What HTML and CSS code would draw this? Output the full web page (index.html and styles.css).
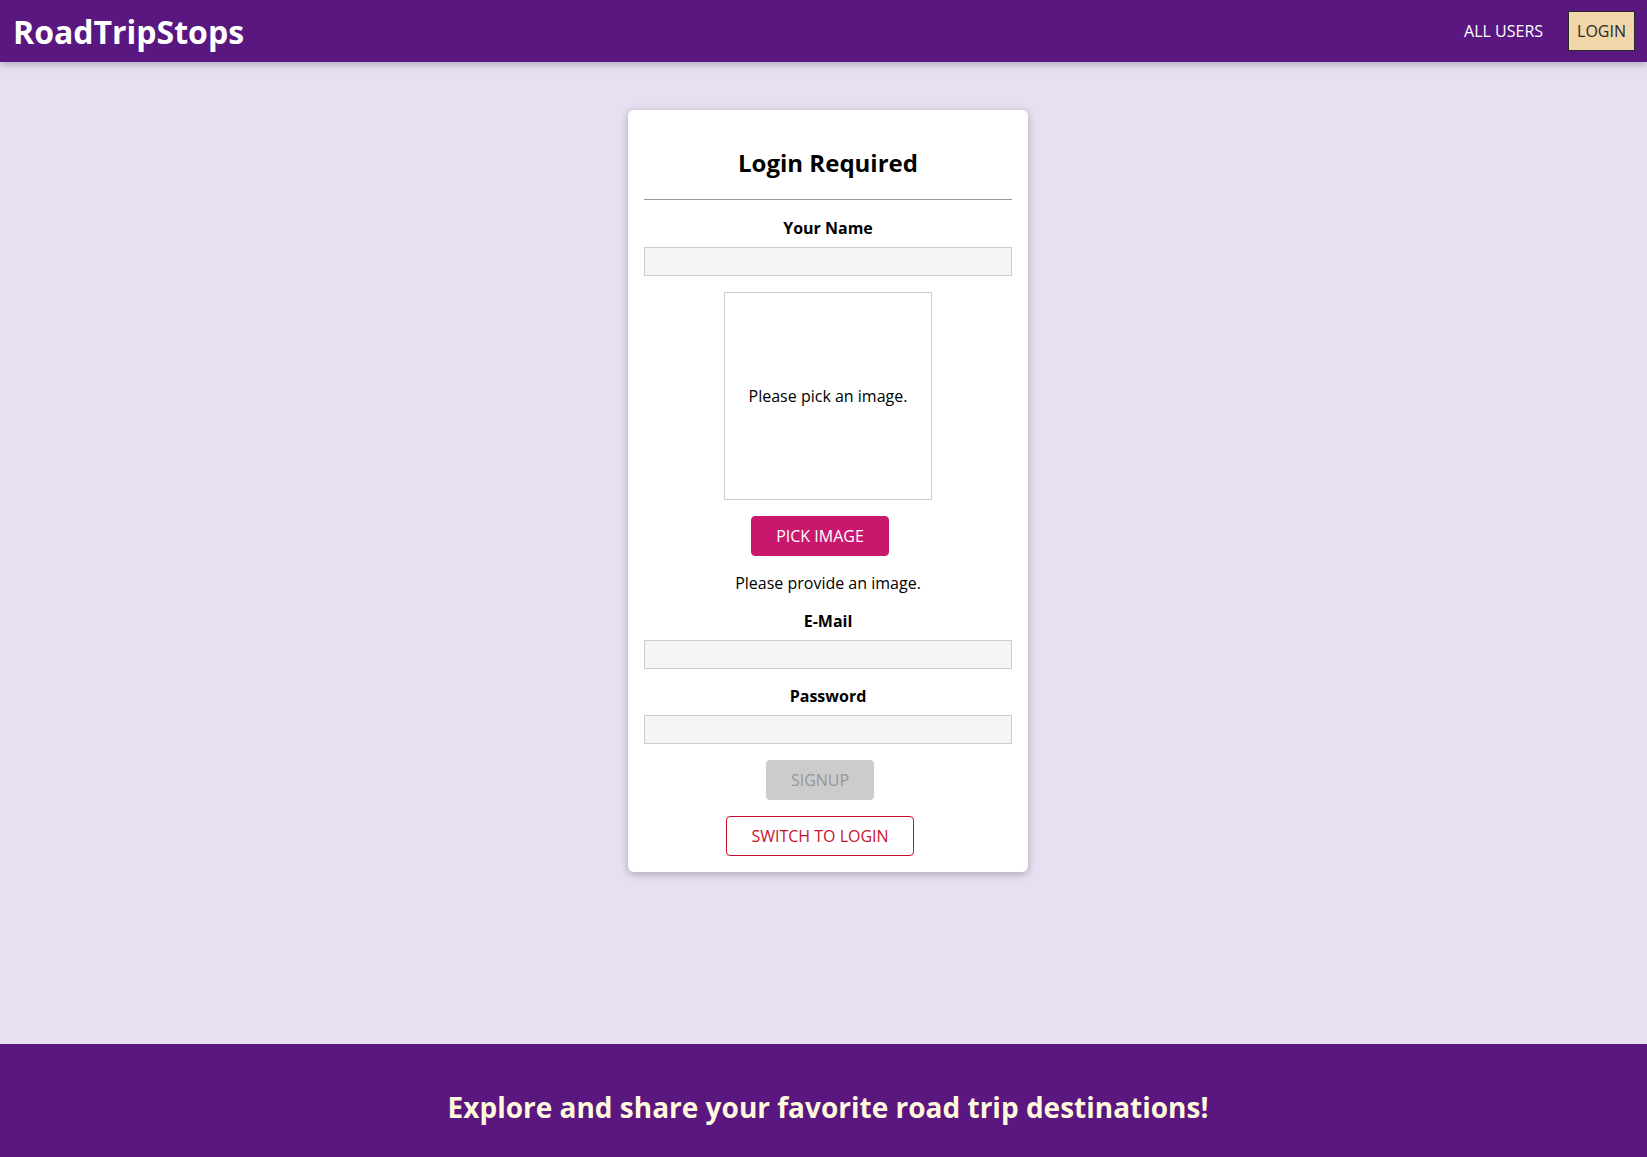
FILE: index.html
```html
<!DOCTYPE html>
<html>

<head>
    <meta charset="utf-8" />
    <title>RoadTripStops</title>
    <link rel="stylesheet" href="styles.css">
</head>

<body>
    <header class="main-header">
        <h1 class="main-title">RoadTripStops</h1>
        <ul class="nav-links">
            <li><a href="#">ALL USERS</a></li>
            <li><a href="#" class="active">LOGIN</a></li>
        </ul>
    </header>

    <main class="main-area">
        <div class="card authentication">
            <h2>Login Required</h2>
            <hr>
            <form class="auth-form">
                <div class="form-control">
                    <label for="name">Your Name</label>
                    <input id="name" type="text">
                </div>
                <div class="image-upload">
                    <div class="image-upload__preview">
                        <p>Please pick an image.</p>
                    </div>
                    <button type="button" class="button">PICK IMAGE</button>
                </div>
                <p class="hint">Please provide an image.</p>
                <div class="form-control">
                    <label for="email">E-Mail</label>
                    <input id="email" type="email">
                </div>
                <div class="form-control">
                    <label for="password">Password</label>
                    <input id="password" type="password">
                </div>
                <button type="submit" class="button" disabled>SIGNUP</button>
            </form>
            <button class="button button--inverse">SWITCH TO LOGIN</button>
        </div>
    </main>

    <footer class="main-footer">
        <h2>Explore and share your favorite road trip destinations!</h2>
    </footer>
</body>

</html>
```

FILE: styles.css
```css
* {
    box-sizing: border-box;
}

body {
    margin: 0;
    font-family: 'Open Sans', sans-serif;
    background-color: #e8dff2;
    min-height: 100vh;
    display: flex;
    flex-direction: column;
}

.main-header {
    height: 62px;
    background-color: #5a1780;
    box-shadow: 0 2px 8px rgba(0, 0, 0, 0.26);
    display: flex;
    align-items: center;
    justify-content: space-between;
    padding: 0 4px 0 13px;
}

.main-title {
    margin: 0;
    color: white;
    font-size: 32px;
    font-weight: 700;
}

.nav-links {
    list-style: none;
    margin: 0;
    padding: 0;
    display: flex;
    align-items: center;
}

.nav-links li {
    margin: 0 8px;
}

.nav-links a {
    display: block;
    border: 1px solid transparent;
    color: white;
    text-decoration: none;
    padding: 8px;
    font-size: 16px;
    line-height: 22px;
}

.nav-links a.active {
    background-color: #f0d6a9;
    border-color: #292929;
    color: #292929;
}

.main-area {
    flex: 1;
    padding: 48px 0 0 9px;
}

.card {
    width: 400px;
    margin: 0 auto;
    background: white;
    border-radius: 6px;
    box-shadow: 0 2px 8px rgba(0, 0, 0, 0.26);
    padding: 16px;
    text-align: center;
}

.card h2 {
    font-size: 24px;
    margin: 20px 0;
    line-height: 33px;
}

.card hr {
    border: 0;
    border-top: 1px solid #999;
    height: 2px;
    margin: 0 0 16px 0;
}

.auth-form {
    display: flex;
    flex-direction: column;
    align-items: center;
}

.form-control {
    width: 100%;
    margin-bottom: 16px;
}

.form-control label {
    display: block;
    font-weight: 700;
    font-size: 16px;
    line-height: 22px;
    margin-bottom: 8px;
}

.form-control input {
    display: block;
    width: 100%;
    height: 29px;
    font: inherit;
    border: 1px solid #ccc;
    background: #f5f5f5;
    padding: 2px 4px;
}

.image-upload {
    display: flex;
    flex-direction: column;
    align-items: center;
}

.image-upload__preview {
    width: 208px;
    height: 208px;
    border: 1px solid #ccc;
    display: flex;
    justify-content: center;
    align-items: center;
    margin-bottom: 16px;
}

.image-upload__preview p,
.hint {
    margin: 0;
    font-size: 16px;
    line-height: 22px;
}

.hint {
    margin: 16px 0;
}

.button {
    font: inherit;
    font-size: 16px;
    line-height: 22px;
    padding: 8px 24px;
    border: 1px solid #c8186e;
    border-radius: 4px;
    background: #c8186e;
    color: white;
    margin-right: 16px;
    cursor: pointer;
}

.button:disabled {
    background: #ccc;
    border-color: #ccc;
    color: #979797;
    cursor: not-allowed;
}

.button--inverse {
    background: white;
    color: #c8102e;
    border-color: #c8102e;
    margin-top: 16px;
}

.main-footer {
    background-color: #5a1780;
    height: 113px;
    display: flex;
    align-items: center;
    justify-content: center;
    padding: 12px 0 0 9px;
}

.main-footer h2 {
    margin: 0;
    color: #fff8dc;
    font-size: 28px;
    font-weight: 700;
}
```
